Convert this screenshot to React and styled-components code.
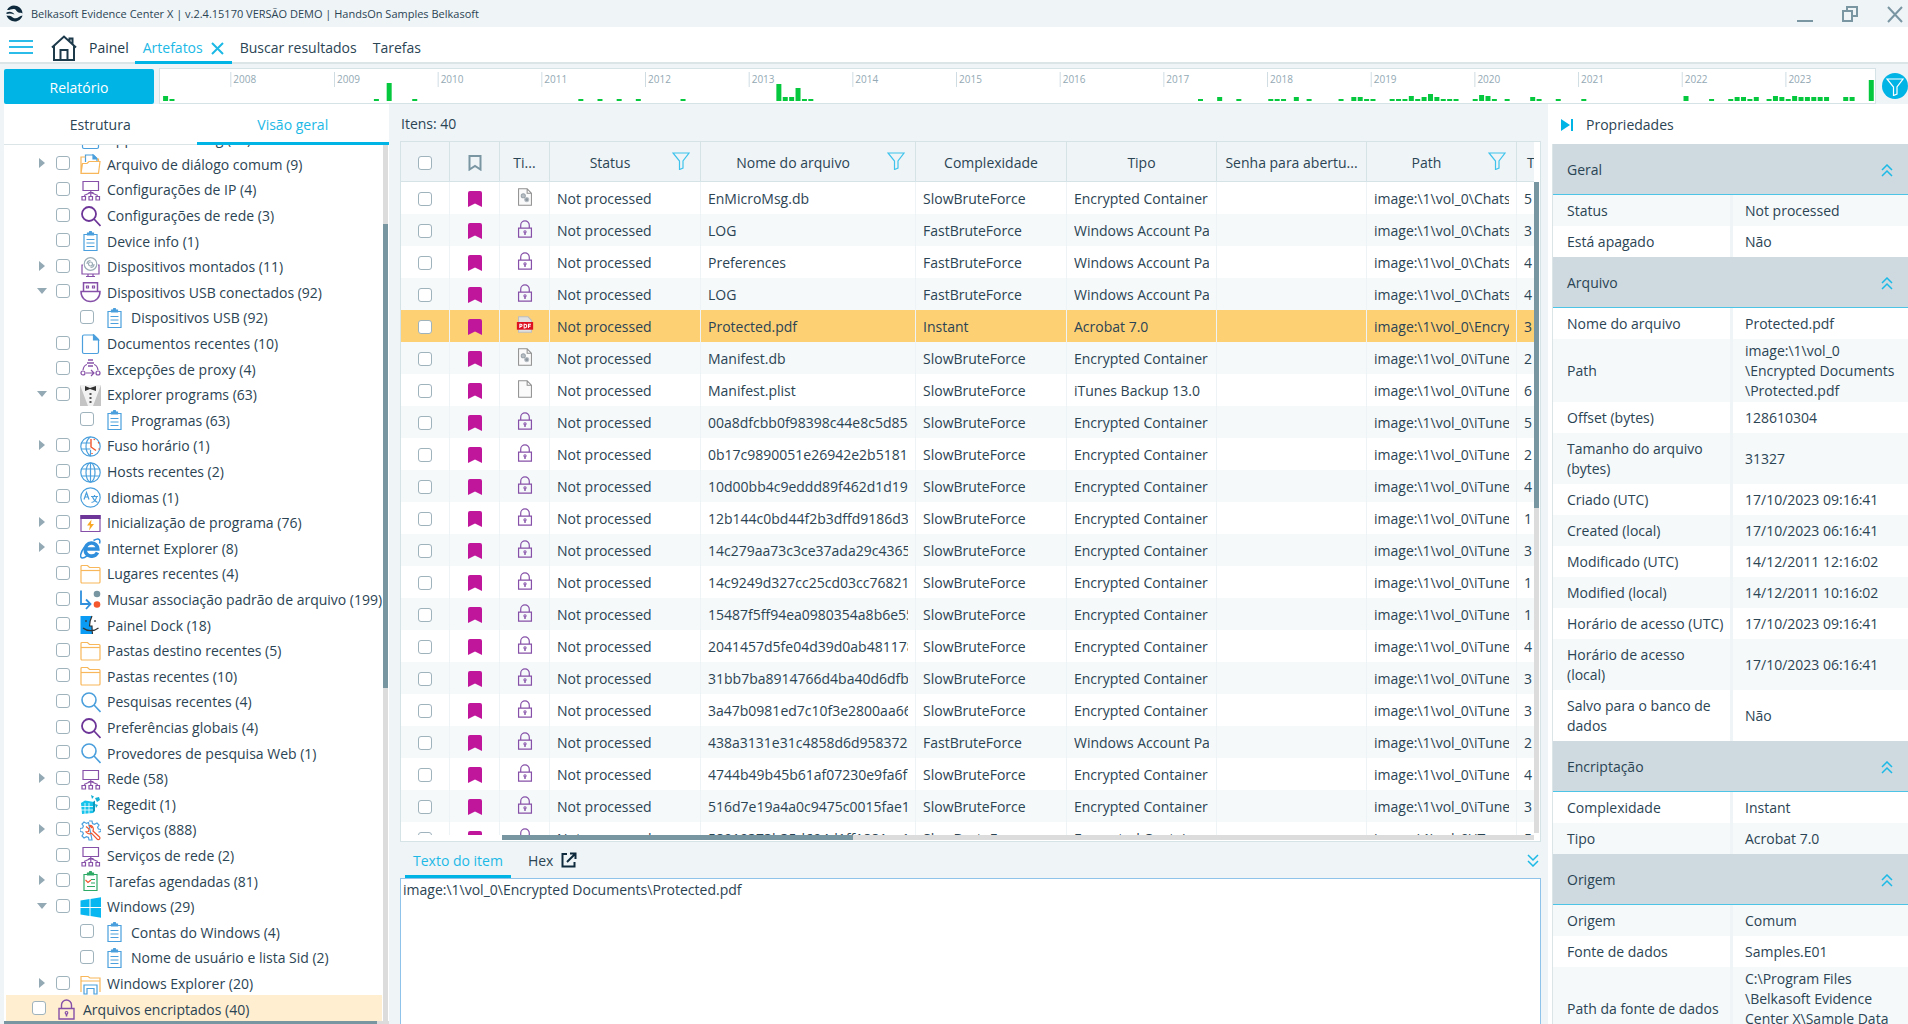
import React from "react";
import styled, { createGlobalStyle, css } from "styled-components";

const TREE = [
  { level: 1, icon: "doc", name: "Application config (10)" },
  { level: 1, icon: "openFolder", name: "Arquivo de diálogo comum (9)", state: "closed" },
  { level: 1, icon: "network", name: "Configurações de IP (4)" },
  { level: 1, icon: "searchPurple", name: "Configurações de rede (3)" },
  { level: 1, icon: "clipboard", name: "Device info (1)" },
  { level: 1, icon: "disk", name: "Dispositivos montados (11)", state: "closed" },
  { level: 1, icon: "usb", name: "Dispositivos USB conectados (92)", state: "open" },
  { level: 2, icon: "clipboard", name: "Dispositivos USB (92)" },
  { level: 1, icon: "doc", name: "Documentos recentes (10)" },
  { level: 1, icon: "proxy", name: "Excepções de proxy (4)" },
  { level: 1, icon: "tuxedo", name: "Explorer programs (63)", state: "open" },
  { level: 2, icon: "clipboard", name: "Programas (63)" },
  { level: 1, icon: "timezone", name: "Fuso horário (1)", state: "closed" },
  { level: 1, icon: "globe", name: "Hosts recentes (2)" },
  { level: 1, icon: "language", name: "Idiomas (1)" },
  { level: 1, icon: "startup", name: "Inicialização de programa (76)", state: "closed" },
  { level: 1, icon: "explorer", name: "Internet Explorer (8)", state: "closed" },
  { level: 1, icon: "folder", name: "Lugares recentes (4)" },
  { level: 1, icon: "assoc", name: "Musar associação padrão de arquivo (199)" },
  { level: 1, icon: "finder", name: "Painel Dock (18)" },
  { level: 1, icon: "folder", name: "Pastas destino recentes (5)" },
  { level: 1, icon: "folder", name: "Pastas recentes (10)" },
  { level: 1, icon: "searchBlue", name: "Pesquisas recentes (4)" },
  { level: 1, icon: "searchPurple", name: "Preferências globais (4)" },
  { level: 1, icon: "searchBlue", name: "Provedores de pesquisa Web (1)" },
  { level: 1, icon: "network", name: "Rede (58)", state: "closed" },
  { level: 1, icon: "regedit", name: "Regedit (1)" },
  { level: 1, icon: "services", name: "Serviços (888)", state: "closed" },
  { level: 1, icon: "network", name: "Serviços de rede (2)" },
  { level: 1, icon: "tasks", name: "Tarefas agendadas (81)", state: "closed" },
  { level: 1, icon: "windows", name: "Windows (29)", state: "open" },
  { level: 2, icon: "clipboard", name: "Contas do Windows (4)" },
  { level: 2, icon: "clipboard", name: "Nome de usuário e lista Sid (2)" },
  { level: 1, icon: "winExplorer", name: "Windows Explorer (20)", state: "closed" },
  { level: 0, icon: "lock", name: "Arquivos encriptados (40)", active: true },
];

const SLOW = "SlowBruteForce";
const FAST = "FastBruteForce";
const CONTAINER = "Encrypted Container";
const ACCOUNT = "Windows Account Pas";
const CHATS = "image:\\1\\vol_0\\Chats";
const ITUNES = "image:\\1\\vol_0\\iTunes";

// icon, file name, complexity, type, path, size
const FILES = [
  ["fileDb", "EnMicroMsg.db", SLOW, CONTAINER, CHATS, "5"],
  ["lock", "LOG", FAST, ACCOUNT, CHATS, "3"],
  ["lock", "Preferences", FAST, ACCOUNT, CHATS, "4"],
  ["lock", "LOG", FAST, ACCOUNT, CHATS, "4"],
  ["pdf", "Protected.pdf", "Instant", "Acrobat 7.0", "image:\\1\\vol_0\\Encryp", "3"],
  ["fileDb", "Manifest.db", SLOW, CONTAINER, ITUNES, "2"],
  ["file", "Manifest.plist", SLOW, "iTunes Backup 13.0", ITUNES, "6"],
  ["lock", "00a8dfcbb0f98398c44e8c5d854", SLOW, CONTAINER, ITUNES, "5"],
  ["lock", "0b17c9890051e26942e2b5181e", SLOW, CONTAINER, ITUNES, "2"],
  ["lock", "10d00bb4c9eddd89f462d1d19", SLOW, CONTAINER, ITUNES, "4"],
  ["lock", "12b144c0bd44f2b3dffd9186d3", SLOW, CONTAINER, ITUNES, "1"],
  ["lock", "14c279aa73c3ce37ada29c43652", SLOW, CONTAINER, ITUNES, "3"],
  ["lock", "14c9249d327cc25cd03cc76821", SLOW, CONTAINER, ITUNES, "1"],
  ["lock", "15487f5ff94ea0980354a8b6e55", SLOW, CONTAINER, ITUNES, "1"],
  ["lock", "2041457d5fe04d39d0ab481178", SLOW, CONTAINER, ITUNES, "4"],
  ["lock", "31bb7ba8914766d4ba40d6dfb", SLOW, CONTAINER, ITUNES, "3"],
  ["lock", "3a47b0981ed7c10f3e2800aa66", SLOW, CONTAINER, ITUNES, "3"],
  ["lock", "438a3131e31c4858d6d958372c", FAST, ACCOUNT, ITUNES, "2"],
  ["lock", "4744b49b45b61af07230e9fa6fb", SLOW, CONTAINER, ITUNES, "4"],
  ["lock", "516d7e19a4a0c9475c0015fae19", SLOW, CONTAINER, ITUNES, "3"],
  ["lock", "58919373b35d694d1ff1881ec1", SLOW, CONTAINER, ITUNES, "5"],
];

const PROPERTIES = [
  { section: "Geral" },
  { label: "Status", value: "Not processed" },
  { label: "Está apagado", value: "Não" },
  { section: "Arquivo" },
  { label: "Nome do arquivo", value: "Protected.pdf" },
  { label: "Path", value: "image:\\1\\vol_0\n\\Encrypted Documents\n\\Protected.pdf" },
  { label: "Offset (bytes)", value: "128610304" },
  { label: "Tamanho do arquivo (bytes)", value: "31327" },
  { label: "Criado (UTC)", value: "17/10/2023 09:16:41" },
  { label: "Created (local)", value: "17/10/2023 06:16:41" },
  { label: "Modificado (UTC)", value: "14/12/2011 12:16:02" },
  { label: "Modified (local)", value: "14/12/2011 10:16:02" },
  { label: "Horário de acesso (UTC)", value: "17/10/2023 09:16:41" },
  { label: "Horário de acesso (local)", value: "17/10/2023 06:16:41" },
  { label: "Salvo para o banco de dados", value: "Não" },
  { section: "Encriptação" },
  { label: "Complexidade", value: "Instant" },
  { label: "Tipo", value: "Acrobat 7.0" },
  { section: "Origem" },
  { label: "Origem", value: "Comum" },
  { label: "Fonte de dados", value: "Samples.E01" },
  { label: "Path da fonte de dados", value: "C:\\Program Files\n\\Belkasoft Evidence\nCenter X\\Sample Data\n\\Samples.E01" },
];

const YEARS = Array.from({ length: 16 }, (_, i) => 2008 + i);

// [slot, height]
const BARS = [
  [0, 5], [1, 2], [33, 2], [35, 18], [39, 2], [65, 2], [68, 2], [71, 2], [74, 2], [81, 2],
  [96, 17], [97, 4], [98, 4], [99, 13], [100, 2], [101, 2], [162, 2], [165, 4], [168, 2],
  [173, 2], [174, 2], [175, 2], [177, 4], [179, 2], [184, 2], [186, 4], [187, 4], [188, 2],
  [189, 2], [192, 2], [193, 2], [194, 2], [195, 5], [196, 2], [197, 4], [198, 7], [199, 4],
  [200, 2], [201, 2], [202, 2], [205, 2], [206, 6], [207, 5], [208, 2], [210, 2], [214, 4],
  [215, 2], [218, 2], [222, 2], [238, 5], [242, 2], [245, 2], [246, 4], [247, 4], [248, 2],
  [249, 4], [251, 2], [252, 5], [253, 4], [254, 2], [255, 5], [256, 4], [257, 4], [258, 4],
  [259, 4], [260, 4], [263, 4], [264, 4], [267, 21],
];

const BLUE = "#4a9fdc";
const PURPLE = "#8650a8";
const ORANGE = "#f7b75a";

const clipboardPath = (
  <>
    <path d="M4 3.5h13v16H4z" />
    <path d="M7.5 4V2h1.7l.6-1.5h1.4l.6 1.5h1.7v2z" fill="currentColor" />
  </>
);

const ICONS = {
  doc: (
    <g stroke={BLUE}>
      <path d="M4 1h10l4.5 4.5V18a1.5 1.5 0 0 1-1.5 1.5H4A1.5 1.5 0 0 1 2.500 18V2.500A1.500 1.500 0 0 1 4 1z" />
      <path d="M13.500 1v5h5z" fill={BLUE} />
    </g>
  ),
  folder: (
    <g stroke={ORANGE}>
      <path d="M1 18V2.500A1 1 0 0 1 2 1.500h5.500l2 2H19a1 1 0 0 1 1 1V18a1 1 0 0 1-1 1H2a1 1 0 0 1-1-1z" />
      <path d="M1 6.500h19" />
    </g>
  ),
  openFolder: (
    <>
      <path d="M5.500 8V1h8L17 4.500V7" stroke={BLUE} />
      <path d="M13 1v4h4z" fill={BLUE} stroke={BLUE} />
      <path d="M1 19V3h4.500M17 5h1.500v2M1 19.300 2.500 9.500H7l2-2h11l-1.500 11.800z" stroke={ORANGE} />
    </>
  ),
  network: (
    <g stroke={PURPLE}>
      <path d="M3 1.500h15.500v9H3zM10.800 10.500V16M10.800 12.500 4 15.500M10.800 12.500l7 3M8.500 12.500h5" />
      <path d="M2 16.500h3.500V20H2zM9 16.500h3.500V20H9zM16 16.500h3.500V20H16z" />
    </g>
  ),
  searchPurple: <path d="M16 8a7 7 0 1 1-14 0 7 7 0 0 1 14 0zM14 13l6.500 7" stroke="#6c3597" strokeWidth="1.800" />,
  searchBlue: <path d="M16 8a7 7 0 1 1-14 0 7 7 0 0 1 14 0zM14 13l6.500 7" stroke={BLUE} strokeWidth="1.600" />,
  clipboard: (
    <g stroke={BLUE} color={BLUE}>
      {clipboardPath}
      <path d="M6.500 8.500h8M6.500 12h8M6.500 15.500h8" />
    </g>
  ),
  tasks: (
    <g stroke="#2faa66" color="#2faa66">
      {clipboardPath}
      <path d="M11 8.500h4M11 12h4M7 15.500h8" />
      <path d="M5.500 9l2.500 2.500L11 9" stroke="#f0542d" />
    </g>
  ),
  disk: (
    <>
      <path d="M3 8H2v9h17V8h-1M8 17v2.500h5V17M6 19.500h9" stroke={PURPLE} />
      <g stroke="#9aacb5">
        <circle cx="10.500" cy="7" r="6.300" />
        <circle cx="10.500" cy="7" r="2" />
        <path d="M7 7a3.500 3.500 0 0 1 3.500-3.500M14 7a3.500 3.500 0 0 1-3.500 3.500" />
      </g>
    </>
  ),
  usb: (
    <g stroke={PURPLE}>
      <path d="M3.500 9V.8h14V9M1 9.500h19c0 6-4 10-9.500 10S1 15.500 1 9.500z" strokeWidth="1.500" />
      <path d="M6.500 4h2v2h-2zM12.500 4h2v2h-2z" />
    </g>
  ),
  proxy: (
    <g stroke={PURPLE}>
      <path d="M8 1h5M7 4h7M8 7h5" strokeWidth="1.500" />
      <path d="M3 11c.5-3 2-5 4-5.500M18 11c-.5-3-2-5-4-5.500M6 14h8M11 11l3 3-3 3" />
      <circle cx="3" cy="14" r="2" />
      <circle cx="18" cy="14" r="2" />
    </g>
  ),
  tuxedo: (
    <g stroke="none">
      <path d="M0 0h21v21H0z" fill="#f2f2f2" />
      <path d="M0 0l8 21H0zM21 0l-8 21h8z" fill="#c4c4c4" />
      <path d="M5 1l5 2 6-2v5l-6-2-5 2z" fill="#333" />
      <path d="M9.500 8h2v2h-2zM9.500 12h2v2h-2zM9.500 16h2v2h-2z" fill="#555" />
    </g>
  ),
  globe: (
    <g stroke={BLUE}>
      <circle cx="10.500" cy="10.500" r="9.700" />
      <ellipse cx="10.500" cy="10.500" rx="4.500" ry="9.700" />
      <path d="M10.500 1v19M1.500 7h18M1.500 14h18" />
    </g>
  ),
  timezone: (
    <>
      <g stroke={BLUE}>
        <circle cx="10.500" cy="10.500" r="9.700" />
        <path d="M10.500 1C4.500 5 4.500 16 10.500 20M1.500 7h9M1 13h9.500M10.500 14v6" />
      </g>
      <path d="M11 3v8l5 3.500M18 7l1-.5M18.500 13h1M14 4l.5-1M12 18v-1" stroke="#f0542d" strokeWidth="1.400" />
    </>
  ),
  language: (
    <g stroke={BLUE}>
      <circle cx="10.500" cy="10.500" r="9.700" />
      <path d="M4 12.500 6.500 5.500 9 12.500M5 10h3" />
      <path d="M11 9.500h7M14.500 8v1.500M12.500 10c1 3 3 4.500 5 5.500M16.500 10c-.5 3-2.500 5-5 5.500" />
    </g>
  ),
  startup: (
    <>
      <path d="M1 2.500h19v16H1z" stroke={PURPLE} />
      <path d="M1 2.500h19v3H1z" fill="#6c3597" stroke="#6c3597" />
      <path d="M11.500 6.500 7 12.500h3l-1 5 5-6.500h-3z" fill="#f9a825" stroke="none" />
    </>
  ),
  explorer: (
    <>
      <path d="M17.500 14.500a6.500 6.500 0 0 1-12.300-2.800A6.300 6.300 0 0 1 17.800 11H6" stroke="#2f8fdc" strokeWidth="3.600" />
      <path d="M19.500 5.500c1.500-5-1.500-5.500-6-3M4.500 9C0 15-.5 20 2.500 20c1.500 0 3-1 4.500-2.200" stroke="#2f8fdc" strokeWidth="1.500" />
    </>
  ),
  assoc: (
    <>
      <path d="M1 .5V14h9M6 9.500l4.500 4.500L6 19" stroke="#2f8fdc" strokeWidth="1.800" />
      <circle cx="17" cy="4" r="3.300" fill="#7896a2" stroke="none" />
      <circle cx="17" cy="14.500" r="3.300" fill="#f4572b" stroke="none" />
    </>
  ),
  finder: (
    <>
      <path d="M.5 1H12c-2 4-2.500 7-2.500 10H12l.5 8H.5z" fill="#0a9cf5" stroke="none" />
      <path d="M12 1c-2 4-2.500 7-2.500 10H12c0 3 0 5 .5 8M3 13c4 3.500 11 3.500 15.500 0M6 5v2M15 5v2" stroke="#333" />
    </>
  ),
  regedit: (
    <g stroke="none">
      <path d="M1 9l4-2.500L14 8l-1 11-11 1z" fill="#16c4ec" />
      <path d="M13 8l2-1.500V17l-2 2z" fill="#0b98bd" />
      <path d="M5 9v11M9 9v11M1 12.500h12M1 16h12" stroke="#fff" strokeWidth=".8" />
      <path d="M11 1l3 1.500-2 2.500zM15 4l4-1 1 3-3 2zM15 10l3 1-2 3z" fill="#12aed4" />
    </g>
  ),
  services: (
    <>
      <path
        d="M9 1h3l.5 2.500 2 .8L17 3l2 2-1.400 2.300.8 1.700 2.600.5v2l-2.500.7M12 20H9l-.5-2.500-2-.8L4 18l-2-2 1.400-2.300L2.600 12 0 11.500v-3L2.600 8l.8-2L2 4l2-2 2.500 1.400 2-.9z"
        stroke={BLUE}
      />
      <path d="M6 6.500l3 2.500-.5 2.500L6 12c2 2.500 4 2 5.500 1.200l6 6.300c2 .5 3-1.500 2-2.500L13 11c1-3-.5-6-3.500-5.500L12 8" stroke="#f0542d" />
    </>
  ),
  windows: <path d="M.5 3.500 9.500 2v8h-9zM10.500 1.900 21 .3V10H10.500zM.5 11h9v8l-9-1.500zM10.500 11H21v9.700L10.500 19z" fill="#08b7f0" stroke="none" />,
  winExplorer: (
    <>
      <path d="M1 18V2.500h7l2 1.500h10v14M1 7h19" stroke={ORANGE} />
      <path d="M4 20v-9h13v9h-3v-5.500H7V20z" stroke={BLUE} />
    </>
  ),
  lock: (
    <g stroke={PURPLE}>
      <path d="M3 9.500h15V20H3zM5.500 9.500V6a5 5 0 0 1 10 0v3.500" strokeWidth="1.400" />
      <circle cx="10.500" cy="13.800" r="1.300" />
      <path d="M10.500 15v2.500" strokeWidth="1.600" />
    </g>
  ),
  file: <path d="M3 1h10l5 5v14H3zM13 1v5h5" stroke="#909090" fill="#fafafa" />,
  fileDb: (
    <>
      <path d="M3 1h10l5 5v14H3zM13 1v5h5" stroke="#909090" fill="#fafafa" />
      <circle cx="8.500" cy="9" r="2.400" fill="#b8bfc5" stroke="#9aa3aa" />
      <circle cx="12.500" cy="13.500" r="2.400" fill="#8d979f" stroke="#b8bfc5" />
    </>
  ),
  pdf: (
    <>
      <path d="M3 1h11l4 4v14H3z" fill="#e1e1e1" stroke="#bdbdbd" />
      <path d="M1 7h19v9H1z" fill="#dd1021" stroke="none" />
      <path d="M4.500 14V9.500h1.300a1.300 1.300 0 0 1 0 2.600H4.500M9.500 9.500V14h.8a2.200 2.200 0 0 0 0-4.500zM14.500 14V9.500h3M14.500 11.800h2.500" stroke="#fff" />
    </>
  ),
};

const Icon = ({ name, size = 21 }) => (
  <svg width={size} height={size} viewBox="0 0 21 21" fill="none" strokeWidth="1.200" aria-hidden="true">
    {ICONS[name]}
  </svg>
);

const Funnel = ({ color = "#3fc3ec" }) => (
  <svg width="18" height="18" viewBox="0 0 18 18" fill="none" stroke={color} strokeWidth="1.200" aria-hidden="true">
    <path d="M1 1h16l-6 8v7l-3.500 1.500V9z" />
  </svg>
);

const Chevrons = ({ down }) => (
  <svg width="12" height="13" viewBox="0 0 12 13" fill="none" stroke="#1cb9e6" strokeWidth="1.500" aria-hidden="true">
    <path d={down ? "M1 1l5 5 5-5M1 7l5 5 5-5" : "M1 6l5-5 5 5M1 12l5-5 5 5"} />
  </svg>
);

const TopBar = () => (
  <TitleBar>
    <svg width="17" height="17" viewBox="0 0 17 17" fill="#0e2a3c" aria-hidden="true">
      <path d="M1 5C3 1 7-.5 11 1c3.500 1.200 5.500 4 5.500 7.500-1-.8-2.500-.5-4-1C10 6.500 10.500 4 7.500 4 5 4 3 5.500 1 5z" />
      <path d="M16.500 10.500c-1.500 5-6 7-10.500 5.500-3-1-4.500-3-5.500-5.500 2 .5 3.500 0 5 1 1.500 1 2 2 4.500 1.800 2.500-.3 4-2.800 6.500-2.800z" />
      <path d="M.5 7.500c3-1.500 6-1 8 2-2.500-1-5-1.500-8-.5z" />
    </svg>
    <AppTitle>Belkasoft Evidence Center X | v.2.4.15170 VERSÃO DEMO | HandsOn Samples Belkasoft</AppTitle>
    <WindowButtons>
      <IconButton aria-label="Minimizar">
        <svg width="16" height="18" viewBox="0 0 16 18" stroke="#7a96a3" strokeWidth="2"><path d="M0 16h16" /></svg>
      </IconButton>
      <IconButton aria-label="Restaurar">
        <svg width="16" height="18" viewBox="0 0 16 18" fill="none" stroke="#7a96a3" strokeWidth="2">
          <path d="M1 6h9v10H1zM5 6V2h10v9h-5" />
        </svg>
      </IconButton>
      <IconButton aria-label="Fechar">
        <svg width="16" height="18" viewBox="0 0 16 18" stroke="#7a96a3" strokeWidth="2"><path d="M1 2l14 15M15 2L1 17" /></svg>
      </IconButton>
    </WindowButtons>
  </TitleBar>
);

const MainNav = () => (
  <Nav>
    <MenuButton aria-label="Menu">
      <svg width="24" height="16" viewBox="0 0 24 16" stroke="#2bbcea" strokeWidth="2"><path d="M0 2h24M0 8h24M0 14h24" /></svg>
    </MenuButton>
    <HomeLink href="#painel">
      <svg width="26" height="26" viewBox="0 0 26 26" fill="none" stroke="#1d3a4b" strokeWidth="2" aria-hidden="true">
        <path d="M1 12.500 13 1.500l12 11M3 11v14h20V11M9.500 25V15h7v10M18.500 6V3.500h3V9" />
      </svg>
      Painel
    </HomeLink>
    <NavTab $active>
      <NavLink href="#artefatos">Artefatos</NavLink>
      <IconButton aria-label="Fechar Artefatos">
        <svg width="13" height="13" viewBox="0 0 13 13" stroke="#1cb9e6" strokeWidth="2"><path d="M1 1l11 11M12 1L1 12" /></svg>
      </IconButton>
    </NavTab>
    <NavTab><NavLink href="#buscar">Buscar resultados</NavLink></NavTab>
    <NavTab><NavLink href="#tarefas">Tarefas</NavLink></NavTab>
  </Nav>
);

const Timeline = () => (
  <TimelineBox>
    <svg width="100%" height="34" aria-label="Linha do tempo">
      {YEARS.map((year, i) => (
        <g key={year}>
          <rect x={`${4.1 + i * 6.045}%`} y="3" width="1" height="15" fill="#cfdde3" />
          <text x={`${4.1 + i * 6.045}%`} dx="3" y="14">{year}</text>
        </g>
      ))}
      {BARS.map(([slot, height]) => (
        <rect key={slot} x={`${0.18 + slot * 0.3725}%`} y={32 - height} width="5" height={height} fill="#06c83e" />
      ))}
    </svg>
  </TimelineBox>
);

const Tree = () => (
  <Sidebar>
    <SideTabs>
      <SideTab>Estrutura</SideTab>
      <SideTab $active>Visão geral</SideTab>
    </SideTabs>
    <TreeArea>
      <TreeViewport>
        <TreeList>
          {TREE.map((node, i) => (
            <TreeRow key={i} $level={node.level} $active={node.active}>
              <Toggle>
                {node.state && (
                  <IconButton aria-label={node.state === "open" ? "Recolher" : "Expandir"}>
                    <svg width="10" height="10" viewBox="0 0 10 10" fill="#93a9b4">
                      <path d={node.state === "open" ? "M0 2h10l-5 6z" : "M2 0l6 5-6 5z"} />
                    </svg>
                  </IconButton>
                )}
              </Toggle>
              <Checkbox id={`node-${i}`} />
              <TreeLabel htmlFor={`node-${i}`}>
                <Icon name={node.icon} />
                {node.name}
              </TreeLabel>
            </TreeRow>
          ))}
        </TreeList>
      </TreeViewport>
      <Track>
        <Spacer $size="9%" />
        <Thumb $size="53%" />
      </Track>
    </TreeArea>
    <HTrack $thin>
      <Thumb $size="97%" />
    </HTrack>
  </Sidebar>
);

const FileTable = () => (
  <TableBox>
    <TableViewport>
      <Table>
        <colgroup>
          <col style={{ width: 49 }} />
          <col style={{ width: 50 }} />
          <col style={{ width: 50 }} />
          <col style={{ width: 151 }} />
          <col style={{ width: 215 }} />
          <col style={{ width: 151 }} />
          <col style={{ width: 150 }} />
          <col style={{ width: 150 }} />
          <col style={{ width: 150 }} />
          <col />
        </colgroup>
        <thead>
          <tr>
            <Th><Centered><Checkbox aria-label="Selecionar todos" /></Centered></Th>
            <Th>
              <Centered>
                <svg width="14" height="16" viewBox="0 0 14 16" fill="none" stroke="#7a96a3" strokeWidth="2" aria-label="Marcador">
                  <path d="M1.500 1h11v13.500L7 11l-5.500 3.500z" />
                </svg>
              </Centered>
            </Th>
            <Th>Ti...</Th>
            <Th><HeadCell>Status<FilterButton aria-label="Filtrar Status"><Funnel /></FilterButton></HeadCell></Th>
            <Th><HeadCell>Nome do arquivo<FilterButton aria-label="Filtrar Nome do arquivo"><Funnel /></FilterButton></HeadCell></Th>
            <Th>Complexidade</Th>
            <Th>Tipo</Th>
            <Th>Senha para abertu...</Th>
            <Th><HeadCell>Path<FilterButton aria-label="Filtrar Path"><Funnel /></FilterButton></HeadCell></Th>
            <Th $last>T</Th>
          </tr>
        </thead>
        <tbody>
          {FILES.map(([icon, name, complexity, type, path, size], i) => (
            <FileRow key={i} $selected={icon === "pdf"}>
              <Td><Centered><Checkbox aria-label={`Selecionar ${name}`} /></Centered></Td>
              <Td>
                <Centered>
                  <svg width="14" height="16" viewBox="0 0 14 16" fill="#c0169c" aria-hidden="true">
                    <path d="M0 2a2 2 0 0 1 2-2h10a2 2 0 0 1 2 2v14l-7-3.500L0 16z" />
                  </svg>
                </Centered>
              </Td>
              <Td><Centered $raised><Icon name={icon} size={18} /></Centered></Td>
              <Td><Clip>Not processed</Clip></Td>
              <Td><Clip>{name}</Clip></Td>
              <Td><Clip>{complexity}</Clip></Td>
              <Td><Clip>{type}</Clip></Td>
              <Td />
              <Td><Clip>{path}</Clip></Td>
              <Td $last><Clip>{size}</Clip></Td>
            </FileRow>
          ))}
        </tbody>
      </Table>
    </TableViewport>
    <TableScroll>
      <Track>
        <Thumb $size="50%" />
      </Track>
    </TableScroll>
    <TableHScroll>
      <HTrack>
        <Thumb $size="34%" />
      </HTrack>
    </TableHScroll>
  </TableBox>
);

const ItemText = () => (
  <Details>
    <DetailTabs>
      <DetailTab $active>Texto do item</DetailTab>
      <DetailTab>Hex</DetailTab>
      <IconButton aria-label="Abrir em nova janela">
        <svg width="16" height="16" viewBox="0 0 16 16" fill="none" stroke="#0e2a3c" strokeWidth="2">
          <path d="M6 2H1.500v12.500h12V10M9 1.500h5.500V7M14 2L6 10" />
        </svg>
      </IconButton>
      <CollapseButton aria-label="Recolher painel"><Chevrons down /></CollapseButton>
    </DetailTabs>
    <TextBox aria-label="Texto do item" readOnly value={"image:\\1\\vol_0\\Encrypted Documents\\Protected.pdf"} />
  </Details>
);

const Properties = () => (
  <PropsPanel>
    <PropsTitle>
      <IconButton aria-label="Ocultar propriedades">
        <svg width="12" height="12" viewBox="0 0 12 12" fill="#00b4e6"><path d="M0 0l9 6-9 6zM10 0h2v12h-2z" /></svg>
      </IconButton>
      Propriedades
    </PropsTitle>
    <PropsTable>
      <colgroup>
        <col style={{ width: 180 }} />
        <col />
      </colgroup>
      <tbody>
        {PROPERTIES.map((row, i) =>
          row.section ? (
            <tr key={i}>
              <SectionCell colSpan={2}>
                <SectionHead>
                  {row.section}
                  <IconButton aria-label={`Recolher ${row.section}`}><Chevrons /></IconButton>
                </SectionHead>
              </SectionCell>
            </tr>
          ) : (
            <PropRow key={i}>
              <PropLabel scope="row">{row.label}</PropLabel>
              <PropValue>{row.value}</PropValue>
            </PropRow>
          )
        )}
      </tbody>
    </PropsTable>
  </PropsPanel>
);

export default function App() {
  return (
    <Page>
      <GlobalStyle />
      <TopBar />
      <MainNav />
      <ReportRow>
        <ReportButton>Relatório</ReportButton>
        <Timeline />
        <RoundFilter aria-label="Filtrar linha do tempo"><Funnel color="#fff" /></RoundFilter>
      </ReportRow>
      <Body>
        <Tree />
        <Main>
          <Count>Itens: 40</Count>
          <FileTable />
          <ItemText />
        </Main>
        <Properties />
      </Body>
    </Page>
  );
}

const GlobalStyle = createGlobalStyle`
  * {
    box-sizing: border-box;
  }
  body {
    margin: 0;
    background: #eff4f7;
    color: #2b4454;
    font-family: "Open Sans", "Noto Sans", sans-serif;
    font-size: 14px;
    line-height: 20px;
  }
  button {
    font: inherit;
    color: inherit;
  }
`;
const Page = styled.div`
  display: flex;
  flex-direction: column;
  height: 100vh;
  overflow: hidden;
`;
const IconButton = styled.button`
  display: flex;
  flex: none;
  padding: 0;
  border: 0;
  background: none;
`;
const MenuButton = styled(IconButton)`
  align-items: center;
  padding-top: 4px;
`;
const TitleBar = styled.header`
  display: flex;
  align-items: center;
  height: 27px;
  padding: 0 5px 0 6px;
  gap: 8px;
`;
const AppTitle = styled.h1`
  flex: 1;
  margin: 0;
  font-size: 11px;
  font-weight: 400;
`;
const WindowButtons = styled.div`
  display: flex;
  gap: 29px;
`;
const Nav = styled.nav`
  display: flex;
  align-items: stretch;
  height: 37px;
  padding-left: 9px;
  background: #fff;
  border-bottom: 2px solid #dbe5e8;
`;
const HomeLink = styled.a`
  display: flex;
  align-items: center;
  gap: 12px;
  margin: 4px 0 -2px 18px;
  color: #1d3a4b;
  text-decoration: none;
`;
const NavTab = styled.div`
  display: flex;
  align-items: center;
  gap: 8px;
  margin-bottom: -2px;
  padding: 8px 8px 0;
  border-bottom: 3px solid transparent;
  ${({ $active }) =>
    $active &&
    css`
      margin-left: 6px;
      color: #1cb9e6;
      border-color: #00b4e6;
    `}
`;
const NavLink = styled.a`
  color: inherit;
  text-decoration: none;
`;
const ReportRow = styled.div`
  display: flex;
  align-items: center;
  height: 40px;
  padding: 4px 0 0 4px;
`;
const ReportButton = styled.button`
  width: 150px;
  height: 35px;
  padding: 3px 0 0;
  border: 0;
  border-radius: 2px;
  background: #00b4e6;
  color: #fff;
`;
const TimelineBox = styled.div`
  flex: 1;
  height: 36px;
  margin: 0 6px 0 5px;
  background: #fff;
  border: 1px solid #d5e2e6;

  svg {
    display: block;
  }
  text {
    font-size: 10px;
    fill: #93a9b4;
  }
`;
const RoundFilter = styled.button`
  display: flex;
  align-items: center;
  justify-content: center;
  width: 26px;
  height: 26px;
  padding: 2px 0 0;
  border: 0;
  border-radius: 50%;
  background: #00b4e6;
`;
const Body = styled.div`
  display: grid;
  grid-template-columns: 385px minmax(0, 1fr) 360px;
  flex: 1;
  min-height: 0;
  padding-left: 4px;
`;
const Sidebar = styled.aside`
  display: flex;
  flex-direction: column;
  min-height: 0;
  background: #fff;
`;
const SideTabs = styled.div`
  display: flex;
  flex: none;
  height: 41px;
  border-bottom: 1px solid #dbe5e8;
`;
const SideTab = styled.button`
  flex: 1;
  margin-bottom: -1px;
  padding: 3px 0 0;
  border: 0;
  border-bottom: 3px solid ${({ $active }) => ($active ? "#00b4e6" : "transparent")};
  background: none;
  color: ${({ $active }) => ($active ? "#1cb9e6" : "inherit")};
`;
const TreeArea = styled.div`
  display: flex;
  flex: 1;
  min-height: 0;
  padding-right: 1px;
`;
const TreeViewport = styled.div`
  flex: 1;
  overflow: hidden;
`;
/* scrolled down by 20px */
const TreeList = styled.ul`
  display: grid;
  grid-auto-rows: 1fr;
  height: calc(100% + 20px);
  margin: -20px 2px 0;
  padding: 0;
  list-style: none;
`;
const TreeRow = styled.li`
  display: flex;
  align-items: center;
  min-height: 0;
  padding-left: ${({ $level }) => $level * 24 + 6}px;
  background: ${({ $active }) => ($active ? "#ffeed0" : "none")};
`;
const Toggle = styled.span`
  width: 20px;
  padding-left: 1px;
`;
const Checkbox = styled.input.attrs({ type: "checkbox" })`
  flex: none;
  width: 14px;
  height: 14px;
  margin: 0;
  appearance: none;
  background: #fff;
  border: 1px solid #9fb3bd;
  border-radius: 3px;
`;
const TreeLabel = styled.label`
  display: flex;
  align-items: center;
  gap: 6px;
  margin-left: 10px;
  padding-top: 3px;
  white-space: nowrap;
`;
const Track = styled.div`
  display: flex;
  flex-direction: column;
  width: 5px;
  background: #dcdcdc;
`;
const HTrack = styled.div`
  display: flex;
  height: ${({ $thin }) => ($thin ? 3 : 5)}px;
  background: #dcdcdc;
`;
const Spacer = styled.div`
  flex: 0 0 ${({ $size }) => $size};
`;
const Thumb = styled.div`
  flex: 0 0 ${({ $size }) => $size};
  background: #7896a2;
`;
const Main = styled.main`
  display: flex;
  flex-direction: column;
  min-width: 0;
  min-height: 0;
  padding: 0 7px 0 11px;
`;
const Count = styled.div`
  padding: 10px 0 7px 1px;
`;
const TableBox = styled.section`
  display: grid;
  grid-template-columns: minmax(0, 1fr) 6px;
  grid-template-rows: minmax(0, 1fr) 6px;
  flex: 1;
  min-height: 0;
  background: #fff;
  border: 1px solid #d5e2e6;
`;
const TableViewport = styled.div`
  overflow: hidden;
`;
const Table = styled.table`
  width: 100%;
  table-layout: fixed;
  border-collapse: separate;
  border-spacing: 0;
`;
const Th = styled.th`
  height: 40px;
  padding: ${({ $last }) => ($last ? "2px 0 0 10px" : "2px 0 0")};
  overflow: hidden;
  background: #eff4f7;
  border-right: ${({ $last }) => ($last ? 0 : "1px solid #d5e2e6")};
  border-bottom: 1px solid #d5e2e6;
  font-weight: 400;
  white-space: nowrap;
`;
const HeadCell = styled.div`
  display: grid;
  grid-template-columns: 1fr 30px;
  align-items: center;
`;
const FilterButton = styled(IconButton)`
  padding: 0 2px 3px;
`;
const Centered = styled.div`
  display: flex;
  align-items: center;
  justify-content: center;
  padding-bottom: ${({ $raised }) => ($raised ? 4 : 0)}px;
`;
const FileRow = styled.tr`
  background: #fff;

  &:nth-child(even) {
    background: #f5f9fa;
  }
  ${({ $selected }) =>
    $selected &&
    css`
      && {
        background: #fed074;
      }
    `}
`;
const Td = styled.td`
  height: 32px;
  padding: ${({ $last }) => ($last ? "1px 0 0 7px" : "1px 7px 0")};
  border-right: ${({ $last }) => ($last ? 0 : "1px solid #eef3f5")};
`;
const Clip = styled.div`
  overflow: hidden;
  white-space: nowrap;
`;
const TableScroll = styled.div`
  display: flex;
  padding: 40px 0 2px;
`;
const TableHScroll = styled.div`
  padding-left: 101px;
`;
const Details = styled.section`
  display: flex;
  flex-direction: column;
  flex: none;
  height: 182px;
`;
const DetailTabs = styled.div`
  display: flex;
  align-items: center;
  height: 36px;
  padding: 0 2px 0 5px;
`;
const DetailTab = styled.button`
  height: 36px;
  padding: 5px 8px 0;
  border: 0;
  border-bottom: 3px solid ${({ $active }) => ($active ? "#00b4e6" : "transparent")};
  background: none;
  color: ${({ $active }) => ($active ? "#1cb9e6" : "inherit")};

  & + & {
    margin-left: 9px;
  }
`;
const CollapseButton = styled(IconButton)`
  margin-left: auto;
`;
const TextBox = styled.textarea`
  flex: 1;
  padding: 1px 2px;
  border: 1px solid #8fc3ea;
  border-bottom: 0;
  outline: 0;
  resize: none;
  background: #fff;
  color: inherit;
  font: inherit;
`;
const PropsPanel = styled.aside`
  display: flex;
  flex-direction: column;
  min-height: 0;
  overflow: hidden;
  padding-left: 4px;
  background: #fff;
`;
const PropsTitle = styled.h2`
  display: flex;
  align-items: center;
  flex: none;
  gap: 13px;
  height: 40px;
  margin: 0;
  padding: 2px 0 0 9px;
  font-size: 14px;
  font-weight: 400;
`;
const PropsTable = styled.table`
  width: 100%;
  table-layout: fixed;
  border-collapse: separate;
  border-spacing: 0;
  border-left: 1px solid #dbe5e8;
`;
const SectionCell = styled.td`
  padding: 0;
`;
const SectionHead = styled.div`
  display: flex;
  align-items: center;
  justify-content: space-between;
  height: 51px;
  padding: 2px 15px 0 14px;
  background: #cedae0;
  border-bottom: 1px solid #4cc4e6;
`;
const PropRow = styled.tr`
  background: #fff;

  &:nth-child(even) {
    background: #f5f9fa;
  }
`;
const PropLabel = styled.th`
  padding: 6px 5px 5px 14px;
  border-right: 3px solid #eff4f7;
  font-weight: 400;
  text-align: left;
`;
const PropValue = styled.td`
  padding: 2px 0 1px 12px;
  white-space: pre-line;
`;
